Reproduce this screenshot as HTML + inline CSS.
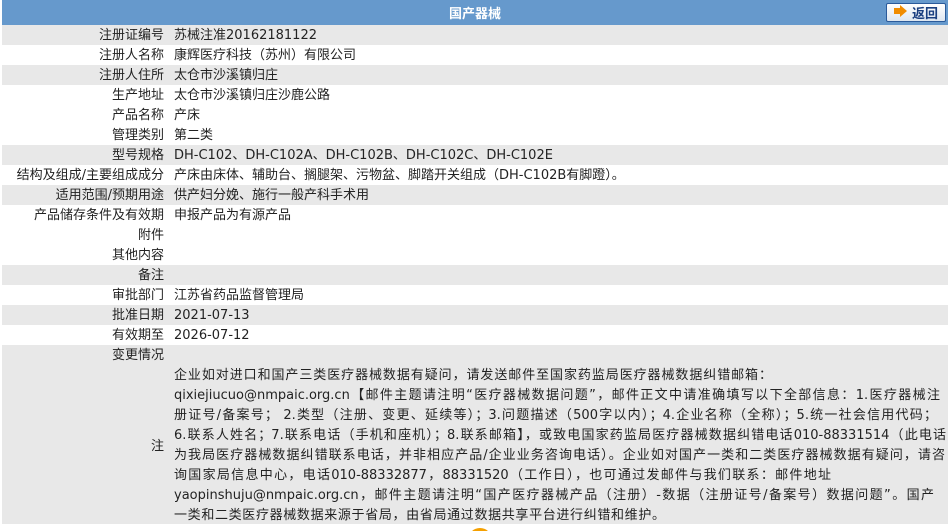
<!DOCTYPE html>
<html><head><meta charset="utf-8"><style>
html,body{margin:0;width:950px;height:531px;overflow:hidden;}
body{background:#fff;font-family:"DejaVu Sans","Noto Sans CJK SC",sans-serif;font-size:13px;color:#222;position:relative}
.hd{position:absolute;left:2px;top:0;width:946px;height:25px;background:#6699cc;color:#fff;font-weight:bold;text-align:center;line-height:25px;font-size:13px;font-family:"Noto Sans CJK SC",sans-serif}
.btn{position:absolute;left:886px;top:3px;width:58px;height:17px;border:1px solid #2a5a9a;border-radius:2px;background:linear-gradient(#fff,#dde6f0);}
.btn .ar{position:absolute;left:7px;top:4px;width:6px;height:6px;background:#f08c00}
.btn .ar2{position:absolute;left:13px;top:1px;width:0;height:0;border-left:7px solid #f08c00;border-top:6px solid transparent;border-bottom:6px solid transparent}
.btn .t{position:absolute;left:25px;top:0;line-height:17px;color:#1a3f80;font-weight:bold;font-size:13px;font-family:"Noto Sans CJK SC",sans-serif}
.row{position:absolute;left:2px;width:946px;height:20px;line-height:22px;white-space:nowrap}
.g{background:#e8e8e8}
.l{position:absolute;right:784px;top:0;text-align:right}
.v{position:absolute;left:172px;top:0}
.note{position:absolute;left:2px;top:345px;width:946px;height:179px;background:#e8e8e8}
.note .lines{position:absolute;left:172px;top:21px;line-height:20px;white-space:nowrap}
.note .lines span{display:block;height:20px;text-align:justify;text-align-last:justify;white-space:normal;overflow:hidden}
.dotw{position:absolute;left:468px;top:528px;width:24px;height:3px;overflow:hidden}
.dot{width:24px;height:24px;border-radius:50%;background:#f5a000}
</style></head><body>
<div class="hd">国产器械</div>
<div class="btn"><div class="ar"></div><div class="ar2"></div><div class="t">返回</div></div>
<div class="row g" style="top:25px"><span class="l">注册证编号</span><span class="v">苏械注准20162181122</span></div>
<div class="row" style="top:45px"><span class="l">注册人名称</span><span class="v">康辉医疗科技（苏州）有限公司</span></div>
<div class="row g" style="top:65px"><span class="l">注册人住所</span><span class="v">太仓市沙溪镇归庄</span></div>
<div class="row" style="top:85px"><span class="l">生产地址</span><span class="v">太仓市沙溪镇归庄沙鹿公路</span></div>
<div class="row" style="top:105px"><span class="l">产品名称</span><span class="v">产床</span></div>
<div class="row" style="top:125px"><span class="l">管理类别</span><span class="v">第二类</span></div>
<div class="row g" style="top:145px"><span class="l">型号规格</span><span class="v">DH-C102、DH-C102A、DH-C102B、DH-C102C、DH-C102E</span></div>
<div class="row" style="top:165px"><span class="l">结构及组成/主要组成成分</span><span class="v">产床由床体、辅助台、搁腿架、污物盆、脚踏开关组成（DH-C102B有脚蹬）。</span></div>
<div class="row g" style="top:185px"><span class="l">适用范围/预期用途</span><span class="v">供产妇分娩、施行一般产科手术用</span></div>
<div class="row" style="top:205px"><span class="l">产品储存条件及有效期</span><span class="v">申报产品为有源产品</span></div>
<div class="row" style="top:225px"><span class="l">附件</span></div>
<div class="row" style="top:245px"><span class="l">其他内容</span></div>
<div class="row g" style="top:265px"><span class="l">备注</span></div>
<div class="row" style="top:285px"><span class="l">审批部门</span><span class="v">江苏省药品监督管理局</span></div>
<div class="row g" style="top:305px"><span class="l">批准日期</span><span class="v">2021-07-13</span></div>
<div class="row" style="top:325px"><span class="l">有效期至</span><span class="v">2026-07-12</span></div>
<div class="note">
<div class="row" style="top:0;left:0;background:none"><span class="l">变更情况</span></div>
<div class="row" style="top:91px;left:0;background:none"><span class="l">注</span></div>
<div class="lines">
<span style="width:598px">企业如对进口和国产三类医疗器械数据有疑问，请发送邮件至国家药监局医疗器械数据纠错邮箱：</span>
<span style="width:766px">qixiejiucuo@nmpaic.org.cn【邮件主题请注明“医疗器械数据问题”，邮件正文中请准确填写以下全部信息：1.医疗器械注</span>
<span style="width:763px">册证号/备案号； 2.类型（注册、变更、延续等）；3.问题描述（500字以内）；4.企业名称（全称）；5.统一社会信用代码；</span>
<span style="width:772px">6.联系人姓名；7.联系电话（手机和座机）；8.联系邮箱】，或致电国家药监局医疗器械数据纠错电话010-88331514（此电话</span>
<span style="width:771px">为我局医疗器械数据纠错联系电话，并非相应产品/企业业务咨询电话）。企业如对国产一类和二类医疗器械数据有疑问，请咨</span>
<span style="width:657px">询国家局信息中心，电话010-88332877，88331520（工作日），也可通过发邮件与我们联系：邮件地址</span>
<span style="width:760px">yaopinshuju@nmpaic.org.cn，邮件主题请注明“国产医疗器械产品（注册）-数据（注册证号/备案号）数据问题”。国产</span>
<span style="width:491px">一类和二类医疗器械数据来源于省局，由省局通过数据共享平台进行纠错和维护。</span>
</div>
</div>
<div class="dotw"><div class="dot"></div></div>
</body></html>
